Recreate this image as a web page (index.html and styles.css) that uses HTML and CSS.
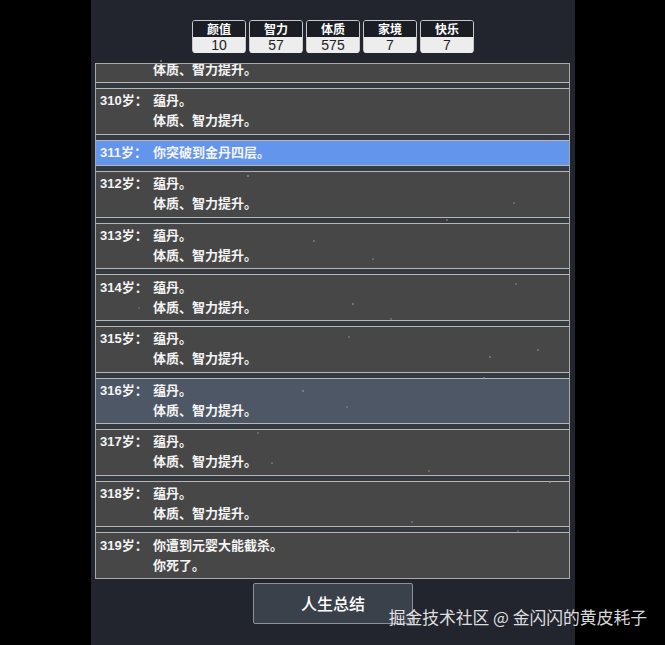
FILE: index.html
```html
<!DOCTYPE html>
<html lang="zh-CN">
<head>
<meta charset="utf-8">
<title>人生重开模拟器</title>
<link rel="stylesheet" href="styles.css">
</head>
<body>
<div class="panel">
  <div class="stats">
    <div class="stat"><div class="stat-name">颜值</div><div class="stat-value">10</div></div>
    <div class="stat"><div class="stat-name">智力</div><div class="stat-value">57</div></div>
    <div class="stat"><div class="stat-name">体质</div><div class="stat-value">575</div></div>
    <div class="stat"><div class="stat-name">家境</div><div class="stat-value">7</div></div>
    <div class="stat"><div class="stat-name">快乐</div><div class="stat-value">7</div></div>
  </div>

  <div class="trajectory">
    <ul class="track">
      <li class="event"><span class="age">309岁：</span><span class="text">蕴丹。<br>体质、智力提升。</span></li>
      <li class="event"><span class="age">310岁：</span><span class="text">蕴丹。<br>体质、智力提升。</span></li>
      <li class="event is-grade"><span class="age">311岁：</span><span class="text">你突破到金丹四层。</span></li>
      <li class="event"><span class="age">312岁：</span><span class="text">蕴丹。<br>体质、智力提升。</span></li>
      <li class="event"><span class="age">313岁：</span><span class="text">蕴丹。<br>体质、智力提升。</span></li>
      <li class="event"><span class="age">314岁：</span><span class="text">蕴丹。<br>体质、智力提升。</span></li>
      <li class="event"><span class="age">315岁：</span><span class="text">蕴丹。<br>体质、智力提升。</span></li>
      <li class="event is-hover"><span class="age">316岁：</span><span class="text">蕴丹。<br>体质、智力提升。</span></li>
      <li class="event"><span class="age">317岁：</span><span class="text">蕴丹。<br>体质、智力提升。</span></li>
      <li class="event"><span class="age">318岁：</span><span class="text">蕴丹。<br>体质、智力提升。</span></li>
      <li class="event"><span class="age">319岁：</span><span class="text">你遭到元婴大能截杀。<br>你死了。</span></li>
    </ul>
  </div>

  <button class="summary" type="button">人生总结</button>
</div>

<div class="sparks" id="sparks"></div>
<div class="watermark">掘金技术社区 @ 金闪闪的黄皮耗子</div>

<script src="sparks.js"></script>
</body>
</html>
```

FILE: styles.css
```css
html, body {
  margin: 0;
  padding: 0;
}

body {
  background: #000;
  width: 665px;
  height: 645px;
  overflow: hidden;
  position: relative;
  font-family: "Liberation Sans", "Noto Sans CJK SC", sans-serif;
  color: #f2f2f2;
}

.panel {
  margin-left: 91px;
  width: 484px;
  height: 645px;
  background: #22252e;
  padding-top: 20px;
  box-sizing: border-box;
}

/* attribute boxes */
.stats {
  display: flex;
  justify-content: center;
  gap: 3.5px;
}

.stat {
  width: 53.5px;
  border: 1px solid #c9c9c9;
  border-radius: 3px;
  box-sizing: border-box;
}

.stat-name {
  background: #1b1d24;
  color: #fff;
  font-family: "Noto Sans CJK SC", sans-serif;
  font-weight: 700;
  font-size: 12px;
  line-height: 16px;
  height: 16px;
  text-align: center;
  border-radius: 2px 2px 0 0;
}

.stat-value {
  background: #ededed;
  color: #222;
  font-size: 14px;
  line-height: 15.3px;
  height: 15.3px;
  padding-top: 0.5px;
  box-sizing: content-box;
  margin-bottom: -0.5px;
  text-align: center;
  border-radius: 0 0 2px 2px;
}

/* life trajectory list */
.trajectory {
  margin: 9.7px 0 0 4px;
  width: 475px;
  height: 516px;
  border: 1px solid #a9a9a9;
  box-sizing: border-box;
  background: #353940;
  overflow: hidden;
}

.track {
  list-style: none;
  margin: -27.6px 0 0;
  padding: 0;
}

.event {
  display: flex;
  background: #474747;
  border-top: 1px solid #b6b6b6;
  border-bottom: 1px solid #b6b6b6;
  padding: 2.3px 4px;
  margin-bottom: 5px;
  font-family: "Liberation Sans", "Noto Sans CJK SC", sans-serif;
  font-weight: 700;
  font-size: 13px;
  line-height: 20px;
  color: #f4f4f4;
}

.event:last-child {
  margin-bottom: 0;
}

.event.is-grade {
  background: #6495ed;
}

.event.is-hover {
  background: #4e5765;
}

.age {
  flex: none;
  width: 53px;
}

.text {
  flex: 1;
}

/* summary button */
.summary {
  display: block;
  margin: 4px auto 0;
  width: 160px;
  height: 41px;
  background: #3b414b;
  border: 1px solid #8c9199;
  border-radius: 2px;
  color: #fff;
  font-family: "Noto Sans CJK SC", sans-serif;
  font-weight: 500;
  font-size: 16px;
  padding: 0;
}

/* floating particles */
.sparks {
  position: absolute;
  inset: 0;
  pointer-events: none;
}

.spark {
  position: absolute;
  width: 2px;
  height: 2px;
  border-radius: 1px;
  opacity: 0.7;
}

.watermark {
  position: absolute;
  right: 18px;
  top: 606px;
  font-family: "Noto Sans CJK SC", sans-serif;
  font-size: 16.8px;
  line-height: 22px;
  color: rgba(255, 255, 255, 0.86);
  white-space: nowrap;
}
```

FILE: sparks.js
```js
// Scatter a fixed set of tiny coloured particles over the page.
(function () {
  var layer = document.getElementById('sparks');
  var dots = [
    [247, 175, '#7fbf8f'], [513, 202, '#8a8a9a'], [446, 219, '#9a8f6a'],
    [313, 240, '#8a9a8a'], [372, 258, '#7a8a9a'], [352, 303, '#9a9aaa'],
    [138, 307, '#6a8a6a'], [515, 283, '#8a8a8a'], [348, 336, '#8a8a7a'],
    [489, 356, '#a0a060'], [537, 349, '#6a9acf'], [483, 377, '#6abf8a'],
    [302, 390, '#9a9aca'], [346, 406, '#8a8a8a'], [257, 432, '#8a8a8a'],
    [549, 481, '#a09aa0'], [271, 462, '#b07aa0'], [411, 521, '#8a8a9a'],
    [517, 530, '#6a7aaa'], [547, 142, '#c07a9a'], [221, 357, '#7a9a7a'],
    [428, 470, '#9a8a6a'], [160, 60, '#7fbf8f'], [390, 318, '#8a8a8a']
  ];
  dots.forEach(function (d) {
    var el = document.createElement('div');
    el.className = 'spark';
    el.style.left = d[0] + 'px';
    el.style.top = d[1] + 'px';
    el.style.background = d[2];
    layer.appendChild(el);
  });
})();
```
